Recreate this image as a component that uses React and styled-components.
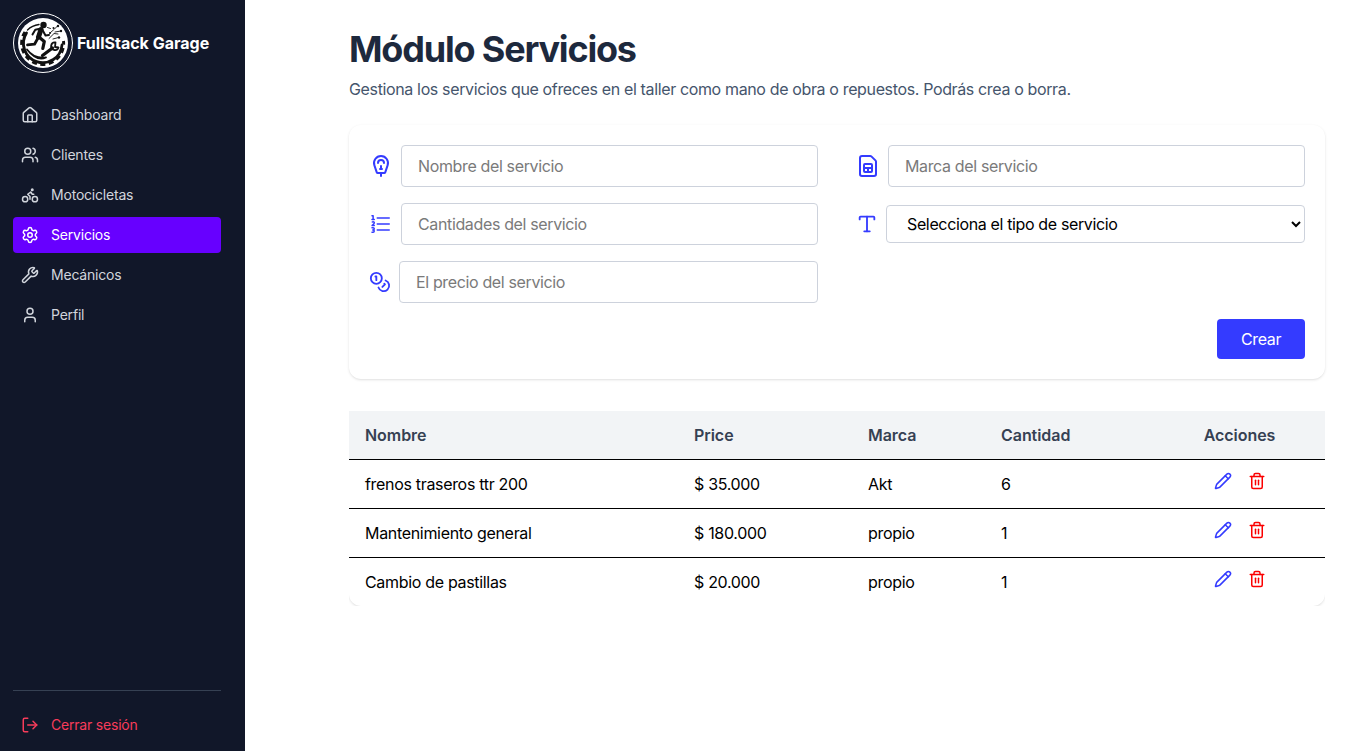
import React from "react";
import styled, { createGlobalStyle, css } from "styled-components";
import {
  House, Users, Bike, Settings, Wrench, User, LogOut,
  Coins, CardSim, ParkingMeter, Type, Pencil, Trash2,
} from "lucide-react";
import { HiOutlineNumberedList } from "react-icons/hi2";

const Global = createGlobalStyle`
  *, *::before, *::after { box-sizing: border-box; }
  body {
    margin: 0;
    background: #fff;
    color: #000;
    font-family: Inter, "Liberation Sans", sans-serif;
    font-size: 16px;
    line-height: 24px;
    letter-spacing: -0.0225em;
  }
  h1, p { margin: 0; }
  svg { display: block; flex-shrink: 0; }
`;

const Page = styled.div`
  display: flex;
  height: 751px;
`;

const Sidebar = styled.aside`
  display: flex;
  flex-direction: column;
  width: 245px;
  padding: 13px 24px 8px 13px;
  background: #111729;
`;

const Brand = styled.div`
  display: flex;
  align-items: center;
  gap: 4px;
  height: 60px;
  color: #fff;
  font-weight: 700;
  letter-spacing: 0;
  white-space: nowrap;
`;

const Nav = styled.nav`
  display: flex;
  flex: 1;
  flex-direction: column;
  gap: 4px;
  margin-top: 24px;
`;

const itemBase = css`
  display: flex;
  align-items: center;
  gap: 12px;
  height: 36px;
  padding: 0 8px;
  border-radius: 4px;
  font-size: 14px;
  line-height: 20px;
  letter-spacing: -0.0145em;
  text-decoration: none;
`;

const NavItem = styled.a`
  ${itemBase}
  color: ${(p) => (p.$active ? "#fff" : "#d1d5dc")};
  background: ${(p) => (p.$active ? "#6700ff" : "transparent")};
`;

const SidebarFooter = styled.div`
  padding-top: 16px;
  border-top: 1px solid #364153;
`;

const Logout = styled.a`
  ${itemBase}
  color: #f73c5a;
`;

const Main = styled.main`
  flex: 1;
  padding: 29px 28px 0 104px;
`;

const Title = styled.h1`
  color: #1d293d;
  font-size: 36px;
  font-weight: 700;
  line-height: 40px;
  letter-spacing: -0.033em;
`;

const Subtitle = styled.p`
  margin-top: 8px;
  color: #45556c;
`;

const FormCard = styled.form`
  display: grid;
  grid-template-columns: 1fr 1fr;
  gap: 16px 38px;
  margin-top: 24px;
  padding: 20px;
  border-radius: 12px;
  background: #fff;
  box-shadow: 0 1px 3px rgba(0, 0, 0, 0.1), 0 1px 2px -1px rgba(0, 0, 0, 0.1);
`;

const Field = styled.label`
  display: flex;
  align-items: center;
  gap: 8px;
  min-width: 0;
  color: #343bff;
`;

const control = css`
  flex: 1;
  min-width: 0;
  border: 1px solid #cdd2dc;
  border-radius: 4px;
  background: #fff;
  color: #000;
  font: inherit;
  letter-spacing: inherit;
`;

const Input = styled.input`
  ${control}
  height: 42px;
  padding: 8px 16px;
  &::placeholder { color: #7a7a7a; opacity: 1; }
`;

const Select = styled.select`
  ${control}
  height: 38px;
  padding: 0 0 0 16px;
`;

const FormActions = styled.div`
  display: flex;
  grid-column: 1 / -1;
  justify-content: flex-end;
`;

const SubmitButton = styled.button`
  width: 88px;
  height: 40px;
  padding: 0;
  border: 0;
  border-radius: 4px;
  background: #343bff;
  color: #fff;
  font: inherit;
  letter-spacing: inherit;
`;

const TableClip = styled.div`
  margin-top: 32px;
  overflow: hidden;
`;

const Table = styled.div`
  border-radius: 12px;
  box-shadow: 0 1px 3px rgba(0, 0, 0, 0.1), 0 1px 2px -1px rgba(0, 0, 0, 0.1);
`;

const Row = styled.div`
  display: grid;
  grid-template-columns: 329px 174px 133px 169px 1fr;
  align-items: center;
  height: 49px;
  border-bottom: 1px solid #000;
  letter-spacing: -0.02em;
  &:last-child { height: 48px; border-bottom: 0; }
`;

const HeadRow = styled(Row)`
  background: #f2f4f6;
  color: #364153;
  font-weight: 600;
  letter-spacing: -0.003em;
`;

const Cell = styled.div`
  padding: 0 16px;
  text-align: ${(p) => (p.$center ? "center" : "left")};
`;

const Actions = styled.div`
  display: flex;
  justify-content: center;
  gap: 16px;
  padding-bottom: 6px;
`;

const IconButton = styled.button`
  padding: 0;
  border: 0;
  background: none;
  color: ${(p) => (p.$danger ? "#fb0000" : "#343bff")};
`;

const Logo = () => (
  <svg width="60" height="60" viewBox="0 0 60 60" fill="none" strokeLinecap="round" strokeLinejoin="round">
    <circle cx="30" cy="30" r="29.5" stroke="#fff" />
    <circle cx="30" cy="30" r="25" fill="#fff" />
    <g stroke="#111">
      <path d="M13.500 20A19.300 19.300 0 1 0 49 32" strokeWidth="2.800" />
      <path d="M12 19A21 21 0 1 0 50.500 28" strokeWidth="3" strokeDasharray="5 3.500" strokeLinecap="butt" />
      <path d="M14.500 17Q19 12.500 26 11.500" strokeWidth="1.400" />
      <path d="M14 36.500Q21 46 33 44.500Q24 49 14 36.500" strokeWidth="1.800" />
      <path d="M28 16.500L25.500 24" strokeWidth="5" />
      <path d="M26.500 24.500L31.300 28.500L29.800 35.500" strokeWidth="3.200" />
      <path d="M25 25L21.500 31.200L14.500 31.800" strokeWidth="2.800" />
      <path d="M27 15.800L22.300 16.700L19.500 21.500M29.500 17L32.500 22.500L36 22" strokeWidth="2" />
      <path d="M29.500 42.500L39.500 35" strokeWidth="3.200" />
      <path d="M42.500 29.500A3.800 3.800 0 1 0 45.500 34.500L42 34Z" strokeWidth="1.800" />
      <path d="M36 25.500l5-5 4 .5M37 20l4.500-4 3-3M40 26l5.500-1.500M42 19l6-1M34.500 14.500l3 1" strokeWidth=".9" />
    </g>
    <circle cx="30.500" cy="12" r="3.200" fill="#111" />
    <g fill="#111">
      <circle cx="45" cy="13" r="1.200" />
      <circle cx="48" cy="18" r="1.200" />
      <circle cx="46" cy="24.500" r="1.200" />
      <circle cx="40.500" cy="15" r="1" />
      <circle cx="37" cy="20" r="1" />
    </g>
  </svg>
);

const NAV = [
  ["Dashboard", House],
  ["Clientes", Users],
  ["Motocicletas", Bike],
  ["Servicios", Settings],
  ["Mecánicos", Wrench],
  ["Perfil", User],
];

const SERVICES = [
  ["frenos traseros ttr 200", "$ 35.000", "Akt", "6"],
  ["Mantenimiento general", "$ 180.000", "propio", "1"],
  ["Cambio de pastillas", "$ 20.000", "propio", "1"],
];

export default function App() {
  return (
    <>
      <Global />
      <Page>
        <Sidebar>
          <Brand><Logo />FullStack Garage</Brand>
          <Nav>
            {NAV.map(([label, Icon]) => (
              <NavItem key={label} $active={label === "Servicios"}>
                <Icon size={18} />
                {label}
              </NavItem>
            ))}
          </Nav>
          <SidebarFooter>
            <Logout><LogOut size={18} />Cerrar sesión</Logout>
          </SidebarFooter>
        </Sidebar>
        <Main>
          <Title>Módulo Servicios</Title>
          <Subtitle>
            Gestiona los servicios que ofreces en el taller como mano de obra o repuestos. Podrás crea o borra.
          </Subtitle>
          <FormCard>
            <Field><ParkingMeter size={24} /><Input placeholder="Nombre del servicio" /></Field>
            <Field><CardSim size={24} /><Input placeholder="Marca del servicio" /></Field>
            <Field><HiOutlineNumberedList size={24} /><Input placeholder="Cantidades del servicio" /></Field>
            <Field>
              <Type size={22} />
              <Select defaultValue="">
                <option value="">Selecciona el tipo de servicio</option>
              </Select>
            </Field>
            <Field><Coins size={22} /><Input placeholder="El precio del servicio" /></Field>
            <FormActions><SubmitButton type="button">Crear</SubmitButton></FormActions>
          </FormCard>
          <TableClip>
            <Table>
              <HeadRow>
                <Cell>Nombre</Cell>
                <Cell>Price</Cell>
                <Cell>Marca</Cell>
                <Cell>Cantidad</Cell>
                <Cell $center>Acciones</Cell>
              </HeadRow>
              {SERVICES.map((cells) => (
                <Row key={cells[0]}>
                  {cells.map((text, i) => <Cell key={i}>{text}</Cell>)}
                  <Actions>
                    <IconButton aria-label="Editar"><Pencil size={18} /></IconButton>
                    <IconButton $danger aria-label="Eliminar"><Trash2 size={18} /></IconButton>
                  </Actions>
                </Row>
              ))}
            </Table>
          </TableClip>
        </Main>
      </Page>
    </>
  );
}
